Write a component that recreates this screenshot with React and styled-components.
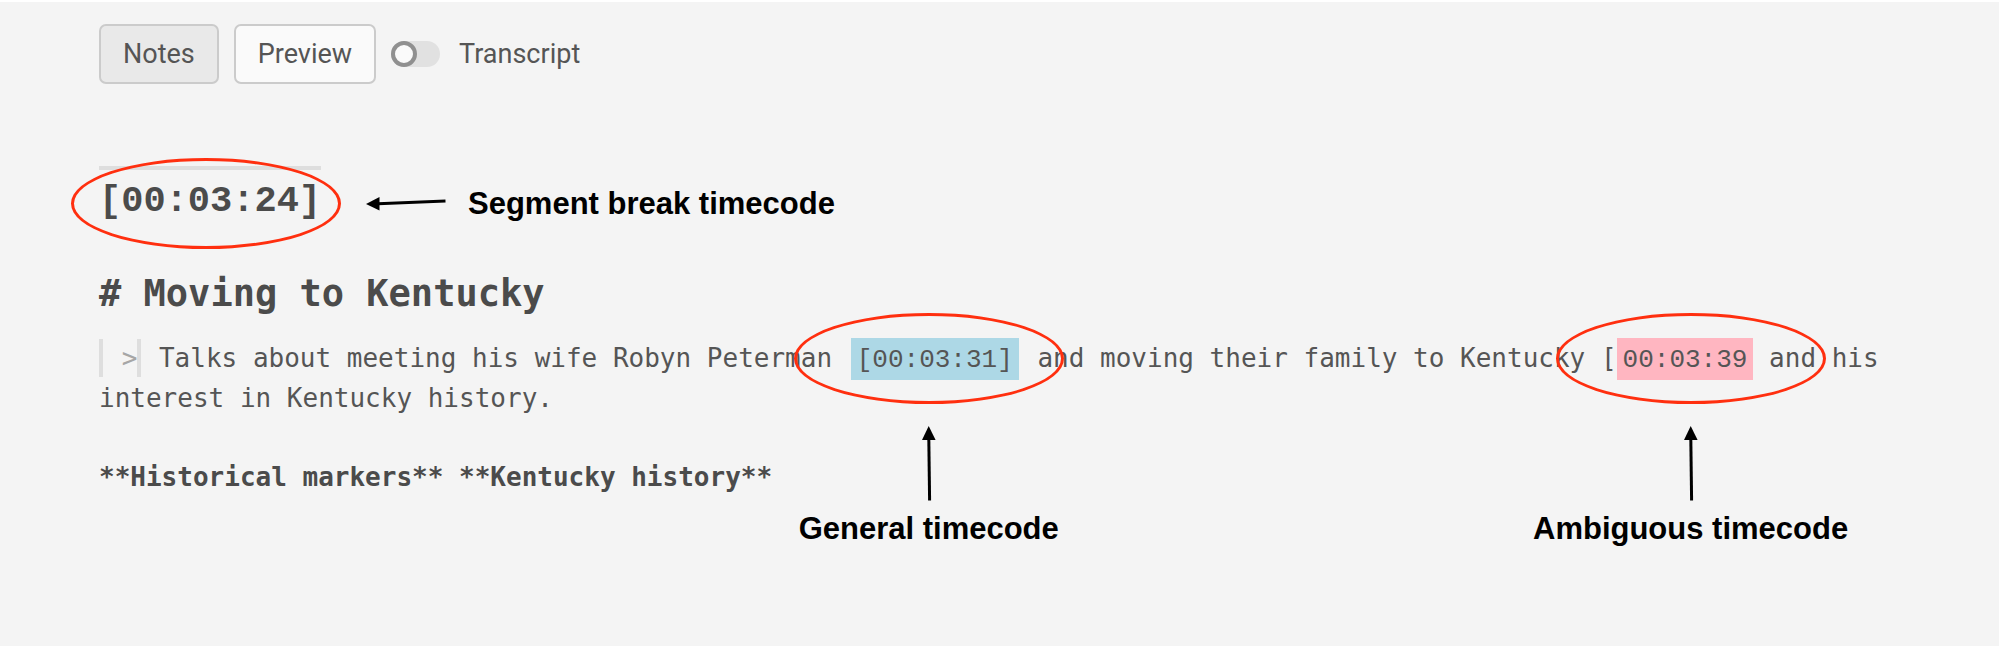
import React from "react";
import styled, { createGlobalStyle } from "styled-components";

const GlobalStyle = createGlobalStyle`
  *, *::before, *::after { box-sizing: border-box; }
  body { margin: 0; background: #f4f4f4; }
`;

const Page = styled.div`
  min-height: 100vh;
  border-top: 2px solid #ffffff;
  padding: 22px 99px 60px;
  background: #f4f4f4;
  color: #555555;
`;

const Toolbar = styled.div`
  display: flex;
  align-items: center;
  gap: 15px;
  font-family: Roboto, "Liberation Sans", sans-serif;
  font-size: 27px;
`;

const TabButton = styled.button`
  height: 60px;
  padding: 0 22px;
  border: 2px solid #cbcbcb;
  border-radius: 7px;
  background: ${(p) => (p.$active ? "#e9e9e9" : "#fafafa")};
  color: inherit;
  font: inherit;
  cursor: pointer;
`;

const SwitchLabel = styled.label`
  display: flex;
  align-items: center;
  gap: 19px;
`;

const Switch = styled.input`
  appearance: none;
  width: 49px;
  height: 26px;
  margin: 0;
  border-radius: 13px;
  background: #e1e1e1;
  cursor: pointer;

  &::before {
    content: "";
    display: block;
    width: 26px;
    height: 26px;
    border: 4px solid #909090;
    border-radius: 50%;
    background: #fafafa;
  }

  &:checked::before { margin-left: 23px; }
`;

const Editor = styled.main`
  margin-top: 82px;
  font-family: "DejaVu Sans Mono", monospace;
  font-size: 26px;
  line-height: 40px;
`;

const SegmentBreak = styled.h2`
  position: relative;
  width: fit-content;
  margin: 0;
  border-top: 4px solid #dedede;
  font-family: "Liberation Mono", monospace;
  font-size: 37px;
  line-height: 62px;
  color: #4b4b4b;
`;

const Title = styled.h1`
  margin: 32px 0 14px;
  font-size: 37px;
  line-height: 60px;
  color: #4b4b4b;
`;

const Paragraph = styled.p`
  margin: 0 0 39px;
`;

const Keywords = styled.strong`
  color: #4b4b4b;
`;

const QuoteMark = styled.span`
  margin-right: 2px;
  padding: 4px 0 4px 3px;
  border: solid #dedede;
  border-width: 0 4px;
  color: #a6a6a6;
  white-space: pre;
`;

const Timecode = styled.span`
  position: relative;
  margin: ${(p) => (p.$ambiguous ? "0" : "0 3px")};
  padding: 7px 6px 5px;
  background: ${(p) => (p.$ambiguous ? "#ffb6c1" : "#add8e6")};
  font-family: "Liberation Mono", monospace;
  line-height: 1;
`;

const Callout = styled.span`
  position: absolute;
  top: ${(p) => p.$top}px;
  left: ${(p) => p.$left}px;
  width: ${(p) => (p.$vertical ? "270px" : "max-content")};
  display: flex;
  flex-direction: ${(p) => (p.$vertical ? "column" : "row")};
  align-items: center;
  pointer-events: none;
`;

const Ring = styled.span`
  flex: none;
  width: 270px;
  height: 91px;
  border: 3px solid #ff2f0f;
  border-radius: 50%;
`;

const UpArrow = styled.svg`
  flex: none;
  margin: 22px 0 10px;
`;

const LeftArrow = styled.svg`
  flex: none;
  margin: 0 22px 0 25px;
`;

const CalloutLabel = styled.span`
  font: bold 31px/36px "Liberation Sans", Arial, sans-serif;
  color: #000000;
  white-space: nowrap;
`;

function VerticalCallout({ left, children }) {
  return (
    <Callout $vertical $top={-25} $left={left}>
      <Ring />
      <UpArrow width="14" height="75" viewBox="0 0 14 75" aria-hidden="true">
        <path d="M6.8 12L7.6 74.5" stroke="#000" strokeWidth="3" />
        <path d="M6.7 0L13.6 14H0Z" fill="#000" />
      </UpArrow>
      <CalloutLabel>{children}</CalloutLabel>
    </Callout>
  );
}

export default function App() {
  return (
    <>
      <GlobalStyle />
      <Page>
        <Toolbar>
          <TabButton type="button" $active aria-pressed="true">Notes</TabButton>
          <TabButton type="button" aria-pressed="false">Preview</TabButton>
          <SwitchLabel htmlFor="transcript">
            <Switch id="transcript" type="checkbox" role="switch" />
            Transcript
          </SwitchLabel>
        </Toolbar>

        <Editor>
          <SegmentBreak>
            [00:03:24]
            <Callout $top={-12} $left={-28}>
              <Ring />
              <LeftArrow width="80" height="16" viewBox="0 0 80 16" aria-hidden="true">
                <path d="M12 7.7L79.5 5" stroke="#000" strokeWidth="3" />
                <path d="M0 8L13.5 1V14.5Z" fill="#000" />
              </LeftArrow>
              <CalloutLabel>Segment break timecode</CalloutLabel>
            </Callout>
          </SegmentBreak>

          <Title># Moving to Kentucky</Title>

          <Paragraph>
            <QuoteMark>{" >"}</QuoteMark> Talks about meeting his wife Robyn Peterman{" "}
            <Timecode>
              [00:03:31]
              <VerticalCallout left={-57}>General timecode</VerticalCallout>
            </Timecode>{" "}
            and moving their family to Kentucky [
            <Timecode $ambiguous>
              00:03:39
              <VerticalCallout left={-61}>Ambiguous timecode</VerticalCallout>
            </Timecode>{" "}
            and his interest in Kentucky history.
          </Paragraph>

          <Paragraph>
            <Keywords>**Historical markers** **Kentucky history**</Keywords>
          </Paragraph>
        </Editor>
      </Page>
    </>
  );
}
